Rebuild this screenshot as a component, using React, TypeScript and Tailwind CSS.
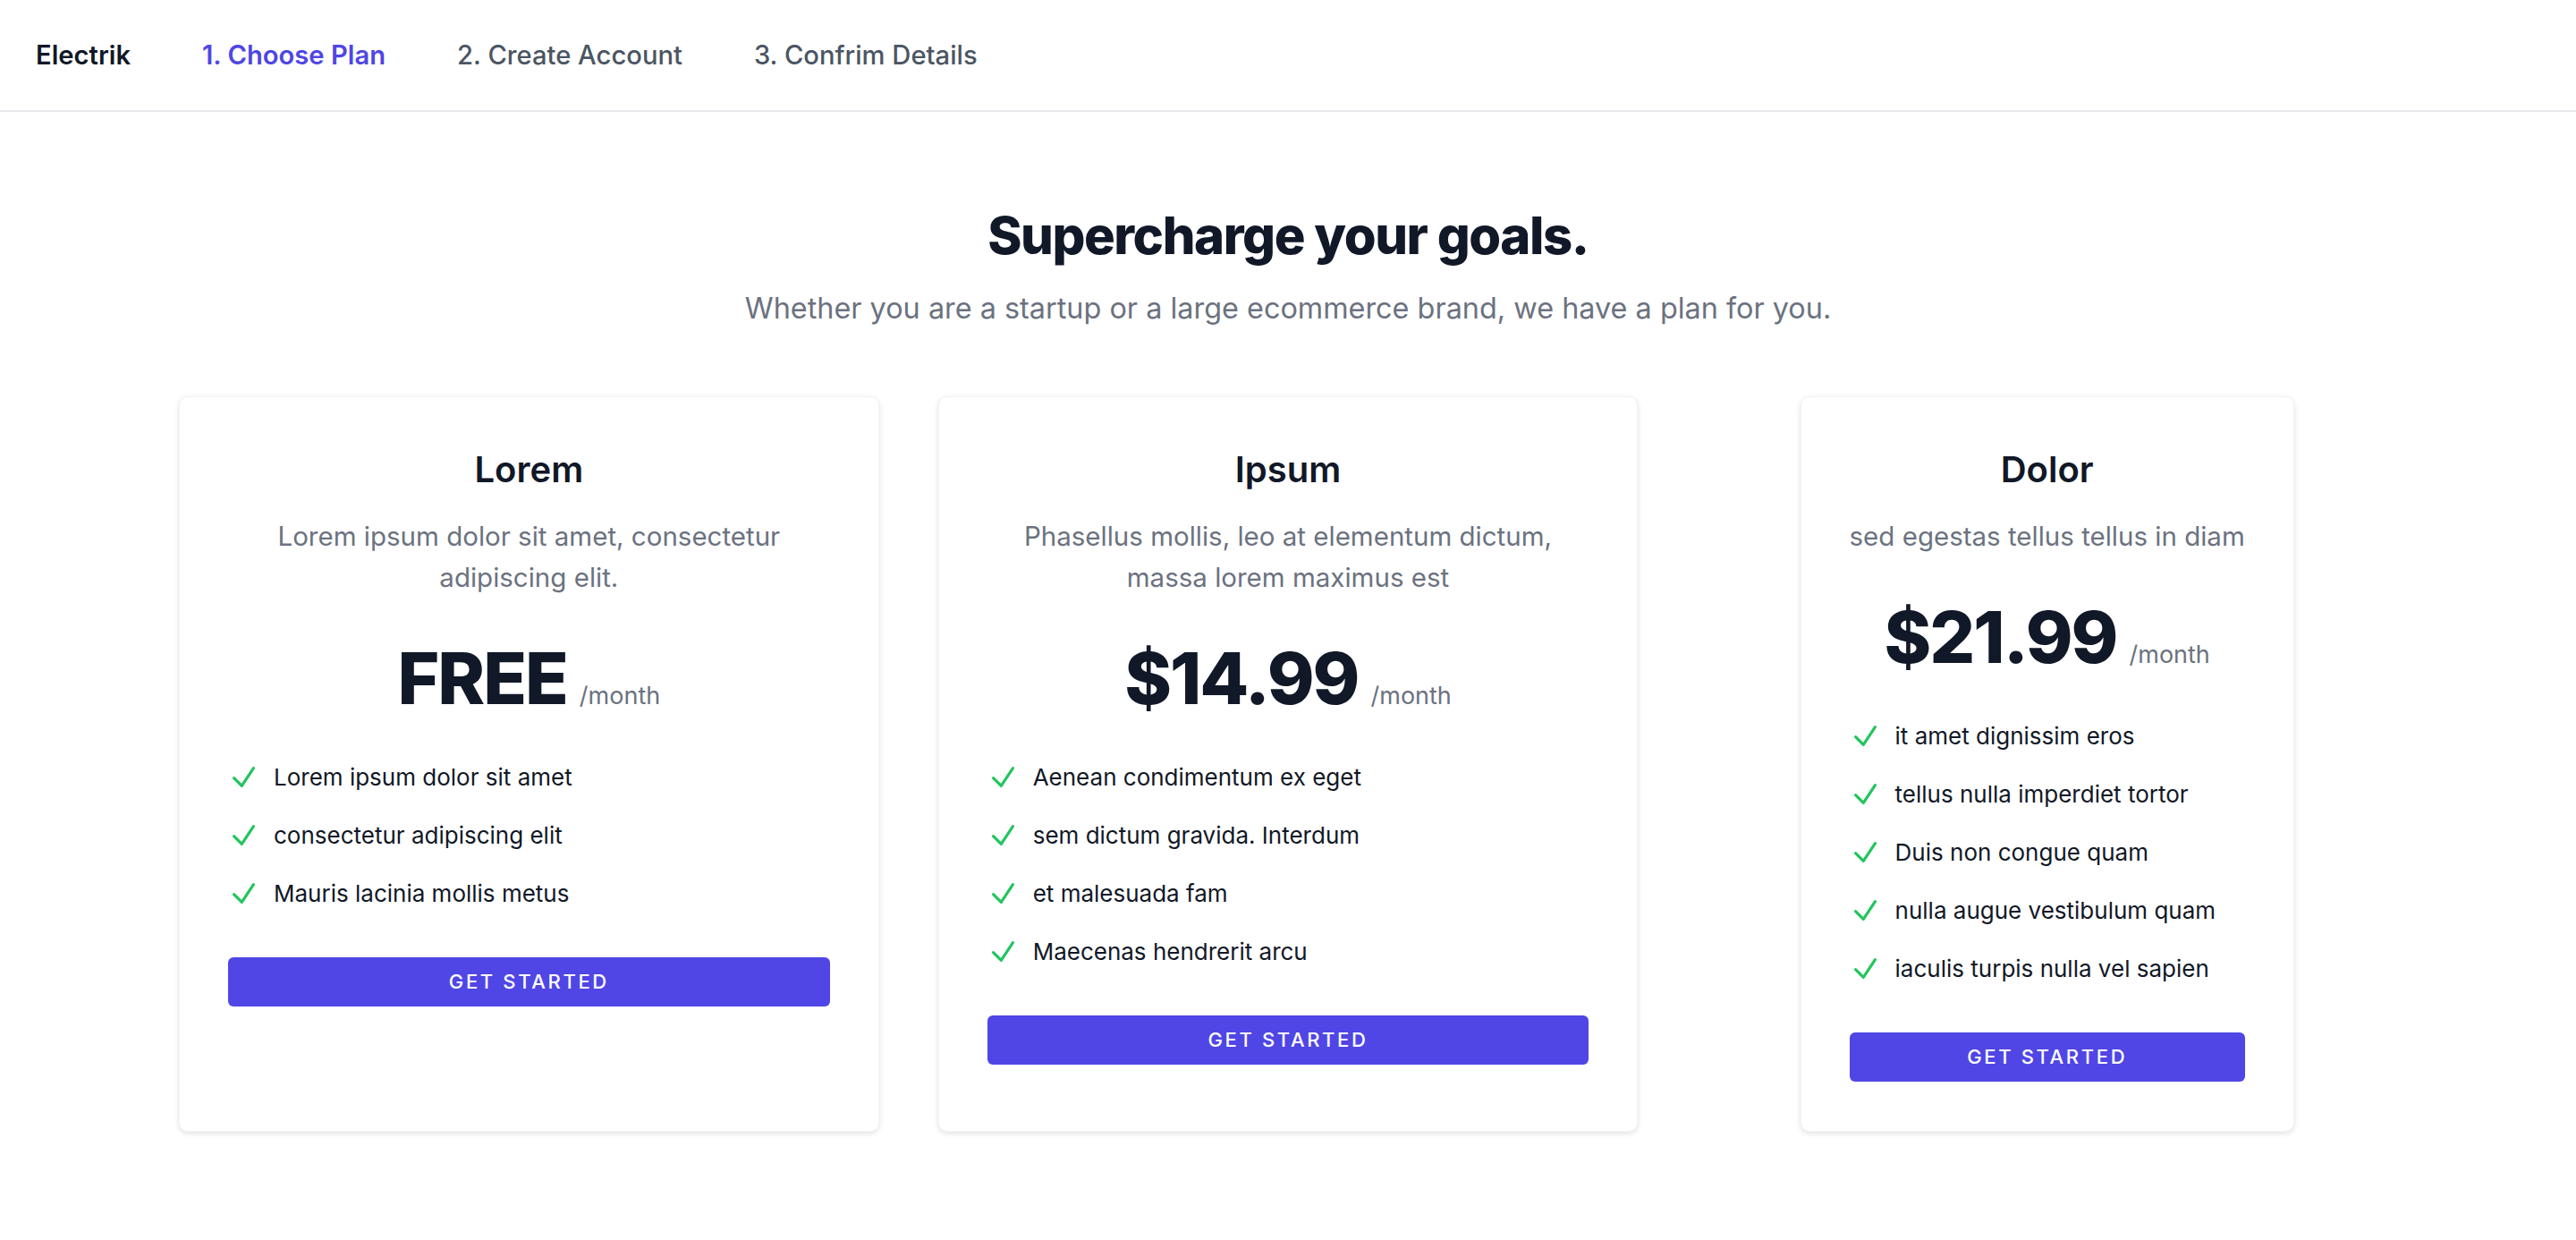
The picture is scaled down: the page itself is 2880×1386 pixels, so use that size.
const plans = [
  {
    name: "Lorem",
    desc: "Lorem ipsum dolor sit amet, consectetur adipiscing elit.",
    price: "FREE",
    features: ["Lorem ipsum dolor sit amet", "consectetur adipiscing elit", "Mauris lacinia mollis metus"],
    width: "w-full",
  },
  {
    name: "Ipsum",
    desc: "Phasellus mollis, leo at elementum dictum, massa lorem maximus est",
    price: "$14.99",
    features: ["Aenean condimentum ex eget", "sem dictum gravida. Interdum", "et malesuada fam", "Maecenas hendrerit arcu"],
    width: "w-full",
  },
  {
    name: "Dolor",
    desc: "sed egestas tellus tellus in diam",
    price: "$21.99",
    features: [
      "it amet dignissim eros",
      "tellus nulla imperdiet tortor",
      "Duis non congue quam",
      "nulla augue vestibulum quam",
      "iaculis turpis nulla vel sapien",
    ],
    width: "w-fit justify-self-center",
  },
];

const CheckIcon = () => (
  <svg viewBox="0 0 24 24" fill="none" stroke="#22c55e" strokeWidth={2.2} className="w-[35px] h-[35px] shrink-0">
    <path strokeLinecap="round" strokeLinejoin="round" d="m4.5 12.75 6 6 9-13.5" />
  </svg>
);

export default function App() {
  return (
    <div className="min-h-screen bg-white text-[#111827] font-['Inter',sans-serif]">
      <nav className="h-[125px] flex items-center gap-[80px] px-[40px] border-b-2 border-[#e5e7eb] text-[29.2px]">
        <span className="font-semibold text-[#111827]">Electrik</span>
        <span className="font-semibold text-[#4f46e5]">1. Choose Plan</span>
        <span className="font-medium text-[#4b5563]">2. Create Account</span>
        <span className="font-medium text-[#4b5563]">3. Confrim Details</span>
      </nav>

      <main className="pt-[100px] pb-[120px]">
        <div className="text-center">
          <h1 className="text-[58px] leading-[76px] font-extrabold tracking-tight text-[#111827]">
            Supercharge your goals.
          </h1>
          <p className="mt-[20px] text-[32.4px] leading-[48px] text-[#6b7280]">
            Whether you are a startup or a large ecommerce brand, we have a plan for you.
          </p>
        </div>

        <div className="mt-[74px] px-[200px] grid grid-cols-3 gap-[66px]">
          {plans.map((p) => (
            <div
              key={p.name}
              className={`${p.width} bg-white rounded-[10px] border border-[#f3f4f6] shadow-[0_2px_6px_rgba(0,0,0,0.12)] px-[54px] pt-[53px] pb-[55px] flex flex-col`}
            >
              <h2 className="text-center text-[40px] leading-[56px] font-semibold text-[#111827]">{p.name}</h2>
              <p className="mt-[23px] text-center text-[29.5px] leading-[46px] text-[#6b7280]">{p.desc}</p>
              <div className="mt-[50px] flex items-baseline justify-center gap-[14px]">
                <span className="text-[80px] leading-[80px] font-extrabold tracking-tight text-[#111827]">{p.price}</span>
                <span className="text-[27px] text-[#6b7280]">/month</span>
              </div>
              <ul className="mt-[50px] flex flex-col gap-[25px]">
                {p.features.map((f) => (
                  <li key={f} className="h-[40px] flex items-center gap-[16px] text-[26px] text-[#111827]">
                    <CheckIcon />
                    <span>{f}</span>
                  </li>
                ))}
              </ul>
              <button className="mt-[51px] h-[55px] w-full rounded-[6px] bg-[#4f46e5] text-white text-[22px] font-medium tracking-[0.12em] uppercase">
                Get started
              </button>
            </div>
          ))}
        </div>
      </main>
    </div>
  );
}
